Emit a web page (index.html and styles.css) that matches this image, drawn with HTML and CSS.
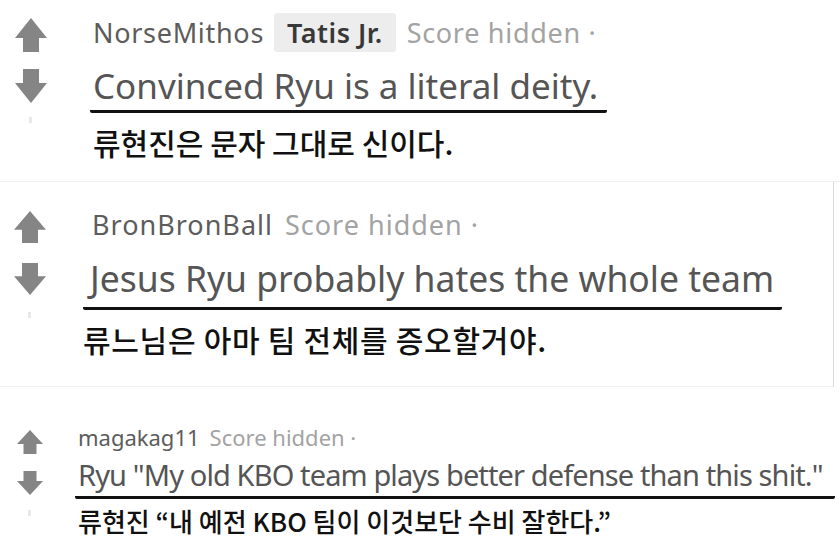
FILE: index.html
```html
<!DOCTYPE html>
<html lang="en">
<head>
<meta charset="utf-8">
<title>Comments</title>
<link rel="stylesheet" href="styles.css">
</head>
<body>
<div class="page">
  <section class="panel p1">
    <div class="votes">
      <svg class="arrow" viewBox="0 0 32 34" preserveAspectRatio="none"><path d="M16 0 L32 20 H24 V34 H8 V20 H0 Z"/></svg>
      <svg class="arrow down" viewBox="0 0 32 34" preserveAspectRatio="none"><path d="M8 0 H24 V14 H32 L16 34 L0 14 H8 Z"/></svg>
      <span class="dot"></span>
    </div>
    <div class="body">
      <div class="meta"><span class="user">NorseMithos</span><span class="flair">Tatis Jr.</span><span class="score">Score hidden ·</span></div>
      <div class="en"><span class="uline">Convinced Ryu is a literal deity.</span></div>
      <div class="ko">류현진은 문자 그대로 신이다.</div>
    </div>
  </section>
  <section class="panel p2">
    <div class="votes">
      <svg class="arrow" viewBox="0 0 32 34" preserveAspectRatio="none"><path d="M16 0 L32 20 H24 V34 H8 V20 H0 Z"/></svg>
      <svg class="arrow down" viewBox="0 0 32 34" preserveAspectRatio="none"><path d="M8 0 H24 V14 H32 L16 34 L0 14 H8 Z"/></svg>
      <span class="dot"></span>
    </div>
    <div class="body">
      <div class="meta"><span class="user">BronBronBall</span><span class="score">Score hidden ·</span></div>
      <div class="en"><span class="uline">Jesus Ryu probably hates the whole team</span></div>
      <div class="ko">류느님은 아마 팀 전체를 증오할거야.</div>
    </div>
  </section>
  <section class="panel p3">
    <div class="votes">
      <svg class="arrow" viewBox="0 0 32 34" preserveAspectRatio="none"><path d="M16 0 L32 20 H24 V34 H8 V20 H0 Z"/></svg>
      <svg class="arrow down" viewBox="0 0 32 34" preserveAspectRatio="none"><path d="M8 0 H24 V14 H32 L16 34 L0 14 H8 Z"/></svg>
      <span class="dot"></span>
    </div>
    <div class="body">
      <div class="meta"><span class="user">magakag11</span><span class="score">Score hidden ·</span></div>
      <div class="en"><span class="uline">Ryu "My old KBO team plays better defense than this shit."</span></div>
      <div class="ko">류현진 “내 예전 KBO 팀이 이것보단 수비 잘한다.”</div>
    </div>
  </section>
</div>
</body>
</html>
```
FILE: styles.css
```css
* { box-sizing: border-box; }
html, body { margin: 0; padding: 0; background: #fff; }
body { width: 840px; height: 551px; overflow: hidden; font-family: "Noto Sans", "Noto Sans CJK KR", sans-serif; }

.page { display: flex; flex-direction: column; }

.panel { display: flex; border-bottom: 1px solid #efefef; }

.votes { flex: none; display: flex; flex-direction: column; align-items: flex-start; }
.arrow { display: block; fill: #858585; }
.dot { display: block; width: 3px; height: 6px; background: #e8e8e8; }

.body { flex: 1; min-width: 0; display: flex; flex-direction: column; align-items: flex-start; }

.meta { display: flex; align-items: center; white-space: nowrap; }
.user { color: #5c5c5c; }
.flair { background: #ededed; color: #383838; font-weight: 600; border-radius: 3px; }
.score { color: #a3a3a3; }

.en { color: #555; white-space: nowrap; }
.uline { display: inline-block; border-bottom: 3px solid #111; border-radius: 0 0 2px 2px; }
.ko { font-family: "Noto Sans CJK KR", sans-serif; font-weight: 500; color: #111; white-space: nowrap; }

/* panel 1 */
.p1 { height: 182px; padding-top: 18px; }
.p1 .votes { width: 93px; padding-left: 15px; gap: 17px; }
.p1 .arrow { width: 32px; height: 34px; }
.p1 .dot { margin: -3px 0 0 14px; }
.p1 .body { margin-top: -5px; }
.p1 .meta { height: 39px; font-size: 27px; letter-spacing: 0.7px; }
.p1 .flair { padding: 0 13px; line-height: 39px; margin: 0 11px 0 10px; letter-spacing: 0.5px; }
.p1 .en { font-size: 35px; line-height: 44px; margin-top: 12px; }
.p1 .uline { margin-left: -3px; padding: 0 9px 2px 3px; }
.p1 .ko { font-size: 30px; line-height: 40px; margin-top: 9px; letter-spacing: 0; }

/* panel 2 */
.p2 { height: 205px; padding-top: 29px; border-right: 1px solid #d8d8d8; margin-right: 6px; }
.p2 .votes { width: 83px; padding-left: 14px; gap: 20px; }
.p2 .arrow { width: 32px; height: 32px; }
.p2 .dot { margin: -3px 0 0 14px; }
.p2 .body { margin-top: -4px; }
.p2 .meta { font-size: 27px; height: 34px; letter-spacing: 1px; padding-left: 9px; }
.p2 .score { margin-left: 12px; }
.p2 .en { font-size: 35.5px; line-height: 44px; margin-top: 15px; }
.p2 .uline { padding: 0 8px 7px 7px; }
.p2 .ko { font-size: 30px; line-height: 40px; margin-top: 9px; letter-spacing: 0.7px; }

/* panel 3 */
.p3 { border-bottom: none; padding-top: 43px; }
.p3 .votes { width: 75px; padding-left: 17px; gap: 17px; }
.p3 .arrow { width: 26px; height: 24px; }
.p3 .dot { margin: -2px 0 0 11px; }
.p3 .body { margin-top: -8px; }
.p3 .meta { font-size: 22px; height: 30px; padding-left: 3px; }
.p3 .score { margin-left: 10px; }
.p3 .en { font-size: 29px; line-height: 38px; margin-top: 4px; letter-spacing: -0.88px; }
.p3 .uline { padding: 0 12px 2px 3px; }
.p3 .ko { font-size: 26px; line-height: 34px; margin-top: 5px; padding-left: 3px; }
```
